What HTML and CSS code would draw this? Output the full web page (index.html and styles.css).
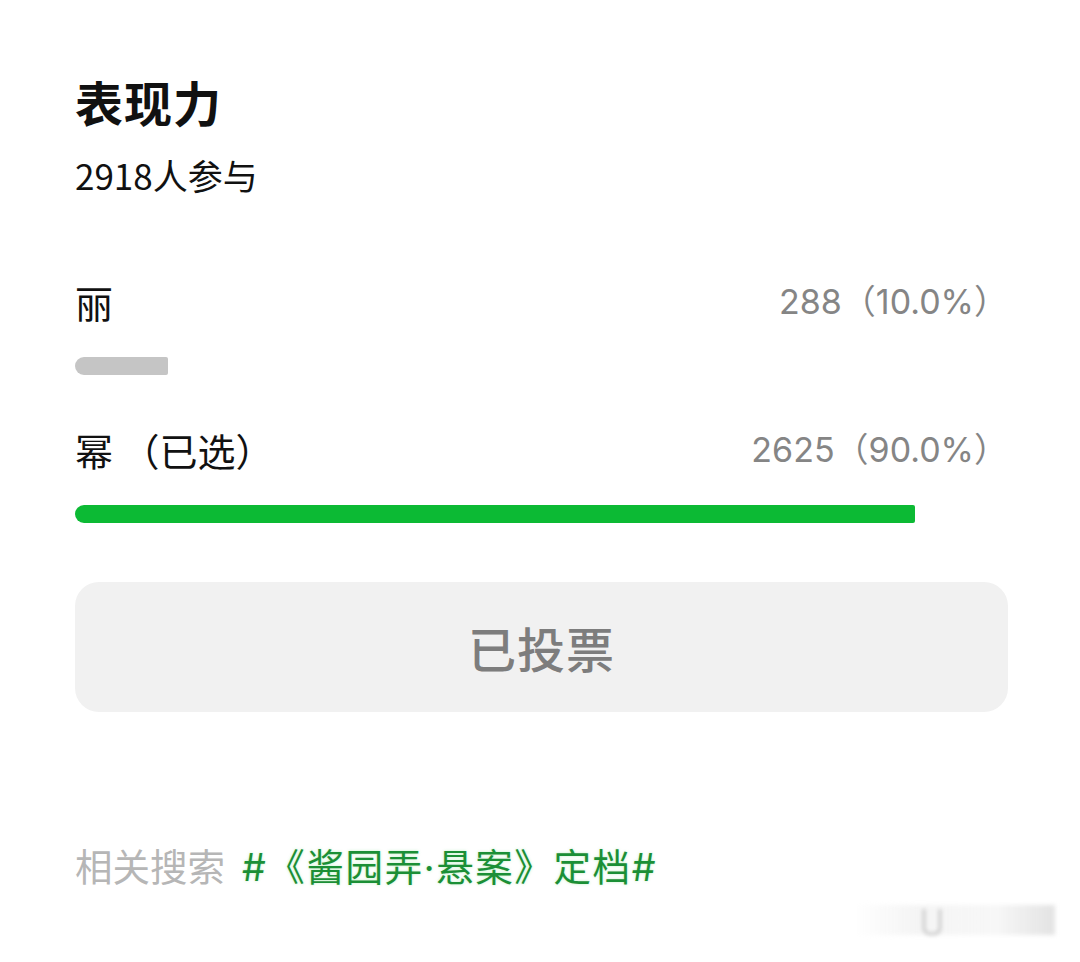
FILE: index.html
```html
<!DOCTYPE html>
<html lang="zh-CN">
<head>
<meta charset="utf-8">
<title>表现力</title>
<link rel="stylesheet" href="styles.css">
</head>
<body>
<main class="poll">
  <h1 class="poll-title">表现力</h1>
  <p class="poll-count">2918人参与</p>

  <section class="option">
    <div class="option-row">
      <span class="option-label">丽</span>
      <span class="option-stat">288（10.0%）</span>
    </div>
    <div class="track"><div class="fill fill-other" style="width: 10%"></div></div>
  </section>

  <section class="option option-second">
    <div class="option-row">
      <span class="option-label">幂 （已选）</span>
      <span class="option-stat">2625（90.0%）</span>
    </div>
    <div class="track"><div class="fill fill-chosen" style="width: 90%"></div></div>
  </section>

  <button class="vote-btn" type="button" disabled>已投票</button>

  <p class="related"><span class="related-label">相关搜索</span><span class="related-topic">#《酱园弄·悬案》定档#</span></p>
</main>
<div class="watermark"><span class="wm-mark"></span></div>
</body>
</html>
```

FILE: styles.css
```css
html, body {
  margin: 0;
  padding: 0;
  background: #ffffff;
}

body {
  width: 1080px;
  height: 962px;
  position: relative;
  overflow: hidden;
  font-family: "Noto Sans CJK SC", "Noto Sans", sans-serif;
  color: #111111;
}

.poll {
  padding: 71px 72px 0 75px;
  display: flex;
  flex-direction: column;
}

.poll-title {
  margin: 0;
  font-size: 48px;
  line-height: 60px;
  font-weight: 700;
  letter-spacing: 1px;
}

.poll-count {
  margin: 24px 0 0;
  font-size: 35px;
  line-height: 40px;
  font-weight: 400;
}

.option {
  margin-top: 85px;
  display: flex;
  flex-direction: column;
}

.option-second {
  margin-top: 53px;
}

.option-row {
  display: flex;
  justify-content: space-between;
  align-items: center;
  height: 44px;
}

.option-label {
  font-size: 38px;
  line-height: 44px;
  color: #111111;
}

.option-stat {
  font-family: "Inter", "Noto Sans CJK SC", sans-serif;
  font-size: 34px;
  line-height: 44px;
  color: #858585;
}

.track {
  margin-top: 33px;
  height: 18px;
  width: 100%;
}

.fill {
  height: 100%;
  border-radius: 9px 2px 2px 9px;
}

.fill-other {
  background: #c5c5c5;
}

.fill-chosen {
  background: #0cba34;
}

.vote-btn {
  margin-top: 59px;
  height: 130px;
  width: 100%;
  border: none;
  border-radius: 24px;
  background: #f1f1f1;
  color: #7d7d7d;
  font-family: "Noto Sans CJK SC", sans-serif;
  font-size: 48px;
  font-weight: 500;
  letter-spacing: 1px;
  padding: 0;
}

.related {
  margin: 131px 0 0;
  font-size: 37.5px;
  line-height: 44px;
}

.related-label {
  color: #b6b6b6;
}

.related-topic {
  font-family: "Inter", "Noto Sans CJK SC", sans-serif;
  margin-left: 17px;
  color: #1b8f36;
  font-weight: 400;
  letter-spacing: 1.6px;
  text-shadow: 0 0 3px rgba(70, 210, 90, 0.35);
}

/* faint corner watermark */
.watermark {
  position: absolute;
  left: 855px;
  top: 905px;
  width: 200px;
  height: 30px;
  background: linear-gradient(90deg, rgba(240,240,240,0) 0%, rgba(242,242,242,0.8) 30%, rgba(244,244,244,0.7) 70%, rgba(220,220,220,0.8) 100%);
  filter: blur(2px);
}

.wm-mark {
  position: absolute;
  left: 68px;
  top: 4px;
  width: 14px;
  height: 24px;
  border: 2px solid #777777;
  border-top: none;
  border-radius: 0 0 7px 7px;
  opacity: 0.5;
}
```
